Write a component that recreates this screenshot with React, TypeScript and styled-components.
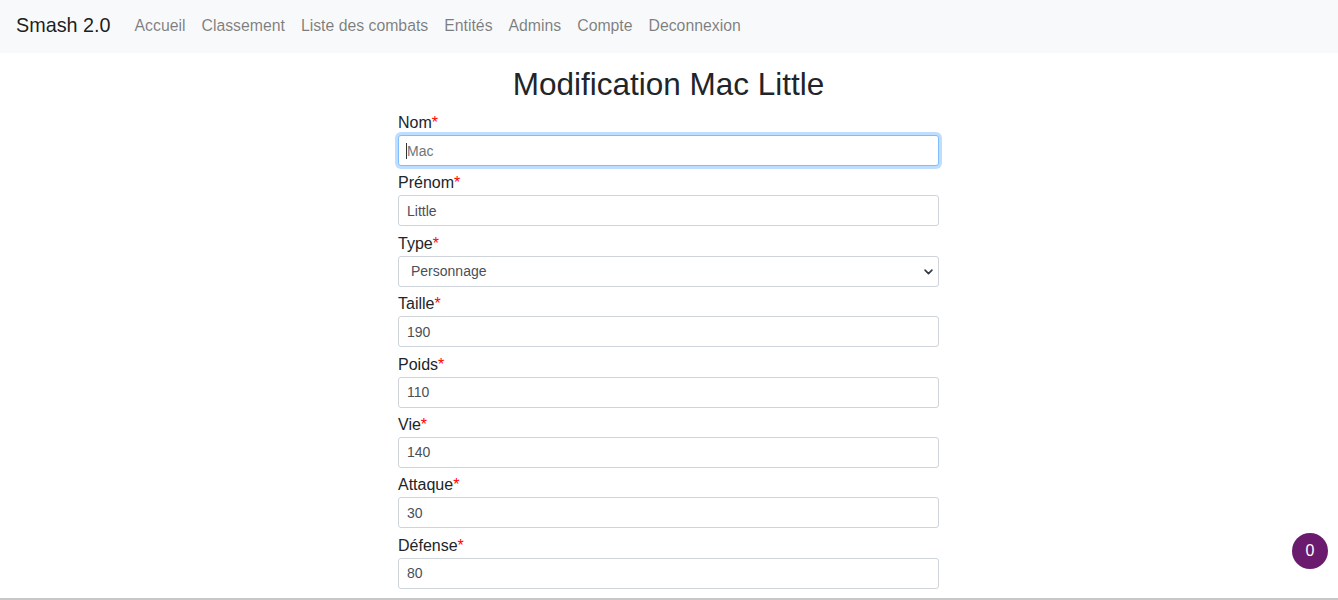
import styled, { createGlobalStyle } from "styled-components"

const GlobalStyle = createGlobalStyle`
  html, body {
    margin: 0;
    padding: 0;
    background: #fff;
    font-family: "Liberation Sans", Arial, sans-serif;
    color: #212529;
  }
  * { box-sizing: border-box; }
`

interface Field {
  label: string
  value: string
  select?: boolean
  focused?: boolean
}

const fields: Field[] = [
  { label: "Nom", value: "Mac", focused: true },
  { label: "Prénom", value: "Little" },
  { label: "Type", value: "Personnage", select: true },
  { label: "Taille", value: "190" },
  { label: "Poids", value: "110" },
  { label: "Vie", value: "140" },
  { label: "Attaque", value: "30" },
  { label: "Défense", value: "80" },
]

const links = ["Accueil", "Classement", "Liste des combats", "Entités", "Admins", "Compte", "Deconnexion"]

function App() {
  return (
    <>
      <GlobalStyle />
      <Navbar>
        <Brand href="#">Smash 2.0</Brand>
        <NavList>
          {links.map((l) => (
            <NavLink key={l} href="#">
              {l}
            </NavLink>
          ))}
        </NavList>
      </Navbar>
      <Main>
        <Title>Modification Mac Little</Title>
        <Form>
          {fields.map((f) => (
            <Group key={f.label}>
              <Label>
                {f.label}
                <Required>*</Required>
              </Label>
              {f.select ? (
                <Select defaultValue={f.value}>
                  <option>Personnage</option>
                  <option>Boss</option>
                </Select>
              ) : f.focused ? (
                <CaretWrap>
                  <Input defaultValue={f.value} $focused />
                </CaretWrap>
              ) : (
                <Input defaultValue={f.value} />
              )}
            </Group>
          ))}
        </Form>
      </Main>
      <Counter>0</Counter>
      <BottomEdge />
    </>
  )
}

const Navbar = styled.nav`
  height: 53px;
  background: #f8f9fa;
  display: flex;
  align-items: center;
  padding: 0 16px 2px;
`

const Brand = styled.a`
  font-size: 19.8px;
  color: rgba(0, 0, 0, 0.9);
  text-decoration: none;
  margin-right: 16px;
`

const NavList = styled.div`
  display: flex;
`

const NavLink = styled.a`
  font-size: 15.8px;
  color: rgba(0, 0, 0, 0.5);
  text-decoration: none;
  padding: 0 8px;
`

const Main = styled.main`
  display: flex;
  flex-direction: column;
  align-items: center;
  padding: 12px 1px 0 0;
`

const Title = styled.h1`
  margin: 0 0 8px;
  font-size: 31.5px;
  font-weight: 400;
  line-height: 38px;
  color: #212529;
`

const Form = styled.form`
  width: 541px;
  display: flex;
  flex-direction: column;
`

const Group = styled.div`
  display: flex;
  flex-direction: column;
  margin-bottom: 5.4px;
`

const Label = styled.label`
  font-size: 16px;
  line-height: 24px;
  color: #212529;
`

const Required = styled.span`
  color: #ff0000;
`

const CaretWrap = styled.div`
  position: relative;

  &::after {
    content: "";
    position: absolute;
    left: 8px;
    top: 8px;
    width: 1px;
    height: 16px;
    background: #333;
  }
`

const Input = styled.input<{ $focused?: boolean }>`
  display: block;
  height: 31px;
  width: 100%;
  padding: 4px 8px;
  font-family: inherit;
  font-size: 14px;
  color: ${(p) => (p.$focused ? "#6c757d" : "#495057")};
  background: #fff;
  border: 1px solid ${(p) => (p.$focused ? "#80bdff" : "#ced4da")};
  border-radius: 3px;
  outline: none;
  box-shadow: ${(p) => (p.$focused ? "0 0 0 3px rgba(0, 123, 255, 0.25)" : "none")};
`

const Select = styled.select`
  height: 31px;
  width: 100%;
  padding: 4px 24px 4px 12px;
  font-family: inherit;
  font-size: 14px;
  color: #495057;
  background: #fff url("data:image/svg+xml,%3Csvg xmlns='http://www.w3.org/2000/svg' viewBox='0 0 16 16'%3E%3Cpath fill='none' stroke='%23343a40' stroke-linecap='round' stroke-linejoin='round' stroke-width='2.4' d='M3 6l5 5 5-5'/%3E%3C/svg%3E") no-repeat right 4px center / 11px 11px;
  border: 1px solid #ced4da;
  border-radius: 3px;
  appearance: none;
  outline: none;
`

const Counter = styled.div`
  position: fixed;
  right: 10px;
  bottom: 31px;
  width: 36px;
  height: 36px;
  border-radius: 50%;
  background: #6a1b6e;
  color: #fff;
  font-size: 16px;
  display: flex;
  align-items: center;
  justify-content: center;
`

const BottomEdge = styled.div`
  position: fixed;
  left: 0;
  right: 0;
  bottom: 0;
  height: 2px;
  background: #c8c8c8;
`

export default App
